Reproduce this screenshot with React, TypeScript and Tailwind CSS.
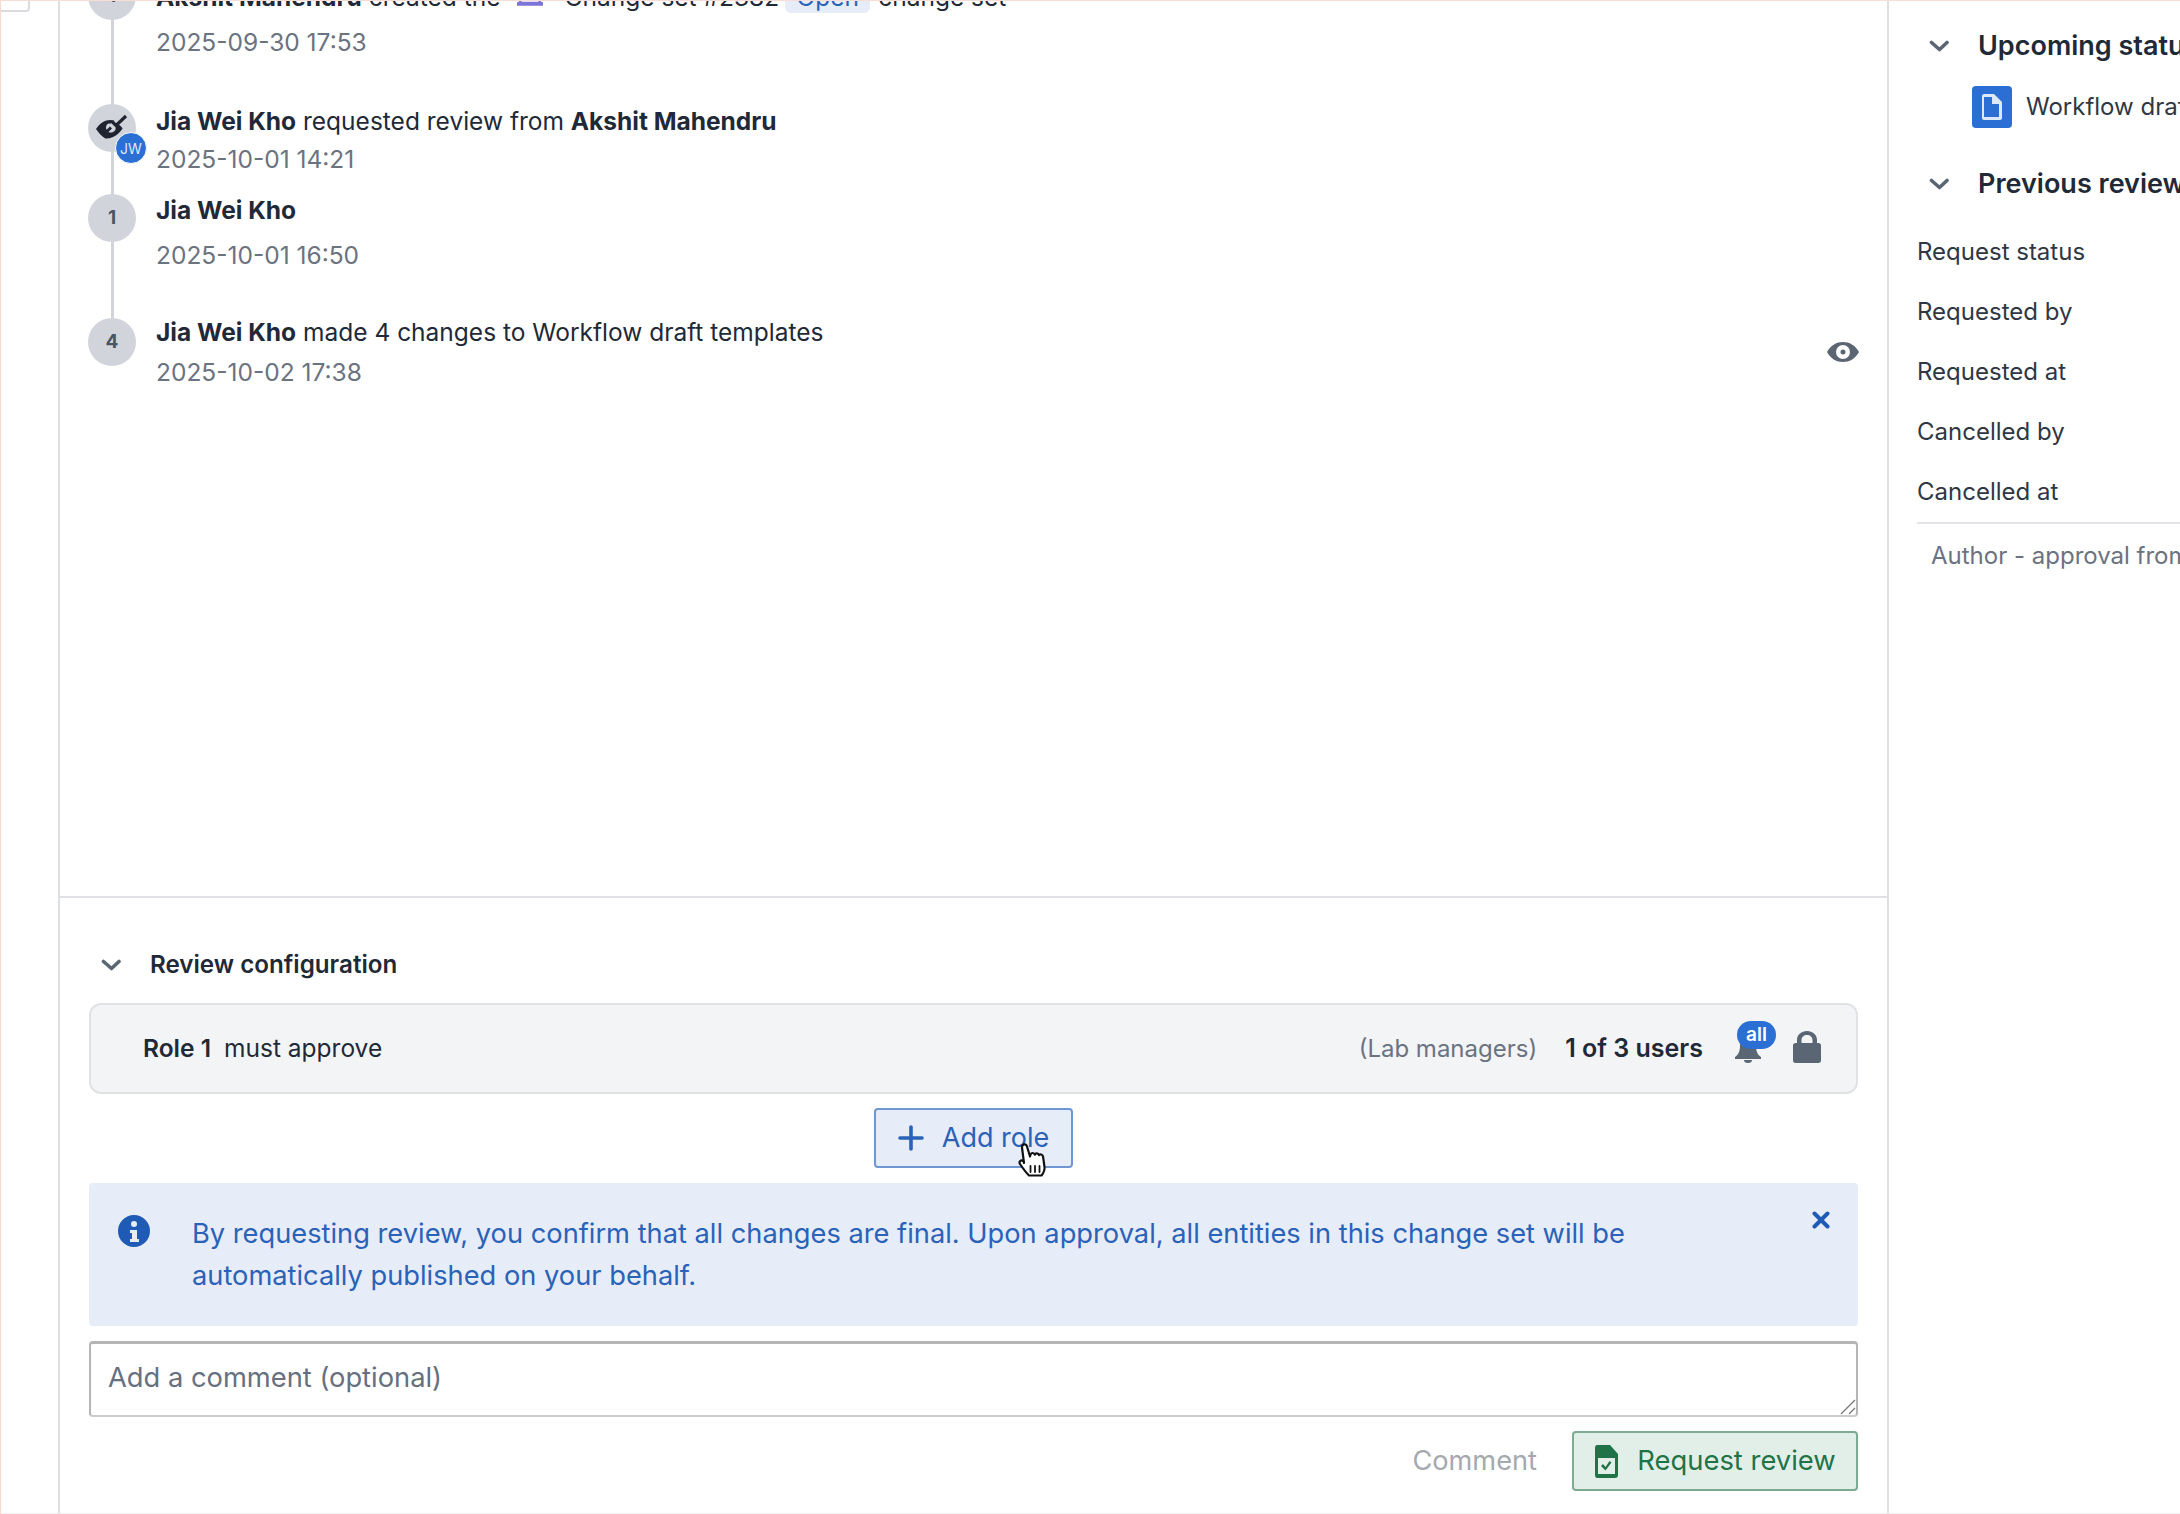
import React from "react";

const Badge = ({ n }: { n: string }) => (
  <div className="z-10 flex h-12 w-12 shrink-0 items-center justify-center rounded-full bg-[#d1d5db] text-[19px] font-bold text-[#4b5563]">{n}</div>
);

const Chevron = () => (
  <svg className="shrink-0" width="21" height="12" viewBox="0 0 21 12" fill="none" stroke="#5b6675" strokeWidth="3.6" strokeLinecap="round" strokeLinejoin="round">
    <path d="M2.5 2.5 10.500 9.500l7.500-7" />
  </svg>
);

function Row({ top, icon, children, date, gap }: { top: string; icon: React.ReactNode; children: React.ReactNode; date: string; gap: string }) {
  return (
    <div className={`absolute left-[28px] z-10 flex w-[1770px] items-start ${top}`}>
      <div className="relative mr-5 w-12 shrink-0">{icon}</div>
      <div className="min-w-0 flex-1 text-[24.5px] leading-[32px] text-[#1f2937]">
        <div>{children}</div>
        <div className={`${gap} text-[#6b7280]`}>{date}</div>
      </div>
    </div>
  );
}

export default function App() {
  return (
    <div className="relative flex h-[1514px] w-[2180px] overflow-hidden bg-white font-['Inter','Noto_Sans',sans-serif]">
      <div className="absolute inset-x-0 top-0 z-20 h-px bg-[#f8ddd6]" />
      <div className="absolute inset-x-0 bottom-0 z-20 h-px bg-[#eeeeee]" />
      <div className="absolute left-0 top-0 z-20 h-full w-px bg-[#fbd9cf]" />
      <div className="absolute left-0 top-0 h-[12px] w-[30px] rounded-br border-b-2 border-r-2 border-[#d9dbdf]" />

      <div className="w-[60px] shrink-0 border-r-2 border-[#dedfe2]" />

      <main className="flex w-[1829px] shrink-0 flex-col border-r-2 border-[#dedfe2]">
        <section className="relative h-[898px] shrink-0 border-b-2 border-[#dfe1e4] pl-[28px] pr-[29px]">
          <div className="absolute left-[51px] top-0 h-[340px] w-[3px] bg-[#d1d5db]" />
          <div className="relative z-10 -mt-[28px] flex items-start">
            <div className="relative mr-5 w-12 shrink-0"><Badge n="1" /></div>
            <div className="mt-[9px] flex-1 text-[24.5px] leading-[32px] text-[#1f2937]">
              <div className="flex h-8 items-center whitespace-nowrap">
                <b className="font-bold">Akshit Mahendru</b>
                <span className="ml-[7px]">created the</span>
                <svg className="-mt-[10px] ml-[15px] shrink-0" width="28" height="28" viewBox="0 0 28 28" fill="none">
                  <path d="M14 2 3.500 25h21L14 2Z" stroke="#7c74d8" strokeWidth="2.500" />
                  <path d="M1 26h26" stroke="#7c74d8" strokeWidth="3.500" />
                </svg>
                <span className="ml-[21px]">Change set #2382</span>
                <span className="ml-[6px] w-[85px] rounded-md bg-[#e6edf8] text-center text-[#2a62b8]">Open</span>
                <span className="ml-[8px]">change set</span>
              </div>
              <div className="mt-[13px] text-[#6b7280]">2025-09-30 17:53</div>
            </div>
          </div>
          <Row
            top="top-[104px]"
            gap="mt-[6px]"
            date="2025-10-01 14:21"
            icon={
              <div className="relative flex h-12 w-12 items-center justify-center rounded-full bg-[#d1d5db]">
                <svg className="-mt-[2px] shrink-0" width="34" height="26" viewBox="0 0 34 26">
                  <path d="M1 15c4-6 9-9 14-9 1 0 3 .2 4 .6l-3 3c-3-.7-5 1-5 4 0 .8.2 1.600.6 2.200l3.400-3.200 2 2-3.600 3.400c.8.4 1.600.6 2.600.6 3 0 5-2.400 4.600-5l3-3c1.500 1 3 2.400 4 4-3 4.800-9 10-15.500 10C9 25 4.500 20 1 15Z" fill="#1f2430" />
                  <path d="M17 7.500 21 11.500 31 2" fill="none" stroke="#1f2430" strokeWidth="3.200" />
                </svg>
                <div className="absolute -bottom-[12px] -right-[11px] flex h-8 w-8 items-center justify-center rounded-full border border-white bg-[#2b6fd4] text-[14px] font-normal text-[#dbe7fa]">JW</div>
              </div>
            }
          >
            <div className="pt-[1px]">
              <b className="font-bold">Jia Wei Kho</b> requested review from <b className="font-bold">Akshit Mahendru</b>
            </div>
          </Row>
          <Row top="top-[194px]" gap="mt-[13px]" date="2025-10-01 16:50" icon={<Badge n="1" />}>
            <b className="font-bold">Jia Wei Kho</b>
          </Row>
          <Row top="top-[318px]" gap="mt-[8px]" date="2025-10-02 17:38" icon={<Badge n="4" />}>
            <div className="-mt-[2px]">
              <b className="font-bold">Jia Wei Kho</b> made 4 changes to Workflow draft templates
            </div>
          </Row>
          <svg className="absolute left-[1766px] top-[340px]" width="34" height="24" viewBox="0 0 34 24">
            <path fillRule="evenodd" d="M1 12C5 5 10.500 2 17 2s12 3 16 10c-4 7-9.500 10-16 10S5 19 1 12Zm16 7a7 7 0 1 0 0-14 7 7 0 0 0 0 14Zm0-4.500a2.500 2.500 0 1 1 0-5 2.500 2.500 0 0 1 0 5Z" fill="#5b6675" />
          </svg>
        </section>

        <section className="flex flex-1 flex-col px-[29px]">
          <div className="mt-[50px] flex h-[34px] items-center pl-[12px] text-[24.2px] font-semibold text-[#1f2937]">
            <Chevron />
            <span className="ml-[28px]">Review configuration</span>
          </div>
          <div className="relative mt-[21px] flex h-[91px] items-center rounded-xl border-2 border-[#e0e2e6] bg-[#f3f4f6] pl-[52px] pr-[34px] text-[24.5px] text-[#1f2937]">
            <b className="font-semibold">Role 1</b>
            <span className="ml-[13px]">must approve</span>
            <span className="ml-auto text-[24px] text-[#6b7280]">(Lab managers)</span>
            <b className="ml-[28px] text-[25px] font-semibold">1 of 3 users</b>
            <div className="relative ml-[30px] h-8 w-[30px] -translate-y-[2px]">
              <svg className="absolute left-0 top-1" width="30" height="30" viewBox="0 0 30 30">
                <path d="M15 2c-5 0-8 4-8 9 0 6-2 9-5 11v2h26v-2c-3-2-5-5-5-11 0-5-3-9-8-9Zm-4 23a4 3 0 0 0 8 0Z" fill="#5b6675" />
              </svg>
              <span className="absolute -right-[13px] -top-[10px] flex h-7 w-[39px] items-center justify-center rounded-full bg-[#2b6fd4] text-[19px] font-semibold leading-none text-white">all</span>
            </div>
            <svg className="ml-[29px] shrink-0 -translate-y-[2px]" width="30" height="34" viewBox="0 0 30 34">
              <path fillRule="evenodd" d="M5 13V10C5 4.500 9.500 1 15 1s10 3.500 10 9v3h1.500c1.500 0 2.500 1 2.500 2.500v15c0 1.500-1 2.500-2.500 2.500h-23C2 33 1 32 1 30.500v-15C1 14 2 13 3.500 13H5Zm4.500 0h11v-3c0-3-2.500-5-5.500-5S9.500 7 9.500 10v3Z" fill="#5b6675" />
            </svg>
          </div>
          <button className="relative mx-auto mt-[14px] flex h-[60px] w-[199px] items-center justify-center gap-[18px] rounded border-2 border-[#6f97d6] bg-[#e6edf8] text-[27px] text-[#2a62b8]">
            <svg className="shrink-0" width="26" height="26" viewBox="0 0 26 26" fill="none" stroke="#2a62b8" strokeWidth="3.600" strokeLinecap="round"><path d="M13 2v22M2 13h22" /></svg>
            <span>Add role</span>
            <svg className="absolute left-[140px] top-[29px] z-10" width="32" height="40" viewBox="0 0 32 40" fill="#ffffff" stroke="#111111" strokeWidth="2.200" strokeLinejoin="round" strokeLinecap="round">
              <path d="M8 24 6 8.500C5.700 5 10 4 11 7.500l3 10 .5-2c1-2 3.500-2 4.300.2.800-1.800 3.500-1.800 4.200.4 1-1.200 3.500-.8 4 1.300l1.500 10.600c.5 4-1 6-3 8.500H13c-3-3-6-7-9-11.500-1.500-2.500 1-4.500 3-3l1 1Z" />
              <path d="M14.500 27v6M19 27v6M23.500 27v6" strokeWidth="1.800" fill="none" />
            </svg>
          </button>
          <div className="relative mt-[15px] flex h-[143px] shrink-0 rounded bg-[#e6ecf8] pl-[28px] pr-[48px] pt-[30px] text-[27.25px] leading-[42px] text-[#2a62b8]">
            <svg className="mt-[1px] shrink-0" width="34" height="34" viewBox="0 0 34 34">
              <path fillRule="evenodd" d="M17 1a16 16 0 1 1 0 32 16 16 0 0 1 0-32Zm0 6a3 3 0 1 0 0 6 3 3 0 0 0 0-6Zm-4 9v3h2v6h-2v3h9v-3h-2v-9Z" fill="#1f5bb5" />
            </svg>
            <div className="ml-[41px] w-[1480px]">By requesting review, you confirm that all changes are final. Upon approval, all entities in this change set will be automatically published on your behalf.</div>
            <svg className="absolute right-[28px] top-[28px]" width="18" height="18" viewBox="0 0 18 18" fill="none" stroke="#1f5bb5" strokeWidth="4" strokeLinecap="round"><path d="M2.500 2.500l13 13M15.500 2.500l-13 13" /></svg>
          </div>
          <div className="relative mt-[15px] flex h-[76px] shrink-0 items-center rounded border-2 border-t-[3px] border-[#b5b5b5] border-b-[#c9cbce] pb-[2px] pl-[17px] text-[27.3px] text-[#667080]">
            Add a comment (optional)
            <svg className="absolute bottom-0 right-0" width="16" height="16" viewBox="0 0 16 16" fill="none" stroke="#777" strokeWidth="1.300"><path d="M1 15 15 1M9 15l6-6" /></svg>
          </div>
          <div className="mt-[14px] flex items-center justify-end">
            <span className="text-[27.2px] text-[#a4a8af]">Comment</span>
            <button className="ml-[35px] flex h-[60px] w-[286px] items-center justify-center gap-[18px] rounded border-2 border-[#7bab91] bg-[#e2efe9] text-[27.4px] text-[#1f7347]">
              <svg className="shrink-0" width="25" height="35" viewBox="0 0 25 35">
                <path fillRule="evenodd" d="M3 1h13l8 9v21c0 2-1 3-3 3H3c-1 0-2-1-2-3V4c0-2 1-3 2-3Zm1 13v16h17V14ZM7 22l2-2 2.500 3 4-6 2 1.500-6 8Z" fill="#1f7347" />
              </svg>
              <span>Request review</span>
            </button>
          </div>
        </section>
      </main>

      <aside className="relative min-w-0 flex-1 overflow-hidden whitespace-nowrap pl-[28px]">
        <div className="mt-[28px] flex h-[36px] items-center pl-[12px] text-[27px] font-semibold text-[#1f2937]">
          <Chevron />
          <span className="ml-[28px]">Upcoming status</span>
        </div>
        <div className="ml-[55px] mt-[22px] flex h-[42px] items-center text-[24px] text-[#2f3744]">
          <div className="flex h-[42px] w-10 shrink-0 items-center justify-center rounded bg-[#2b6fd4]">
            <svg width="22" height="28" viewBox="0 0 22 28">
              <path fillRule="evenodd" d="M3 1h10l8 8v16c0 1-1 2-2 2H3c-1 0-2-1-2-2V3c0-1 1-2 2-2Zm0 3v20h15V11h-7V4Z" fill="#dce8fb" />
            </svg>
          </div>
          <span className="ml-[14px]">Workflow draft templates</span>
        </div>
        <div className="mt-[38px] flex h-[36px] items-center pl-[12px] text-[27px] font-semibold text-[#1f2937]">
          <Chevron />
          <span className="ml-[28px]">Previous reviews</span>
        </div>
        <div className="mt-[34px] flex flex-col gap-[28px] text-[24px] leading-[32px] text-[#2f3744]">
          <div>Request status</div>
          <div>Requested by</div>
          <div>Requested at</div>
          <div>Cancelled by</div>
          <div>Cancelled at</div>
        </div>
        <div className="mt-[14px] border-t-2 border-[#e1e3e6] pl-[14px] pt-[16px] text-[24px] leading-[32px] text-[#6b7280]">Author - approval from all</div>
      </aside>
    </div>
  );
}
